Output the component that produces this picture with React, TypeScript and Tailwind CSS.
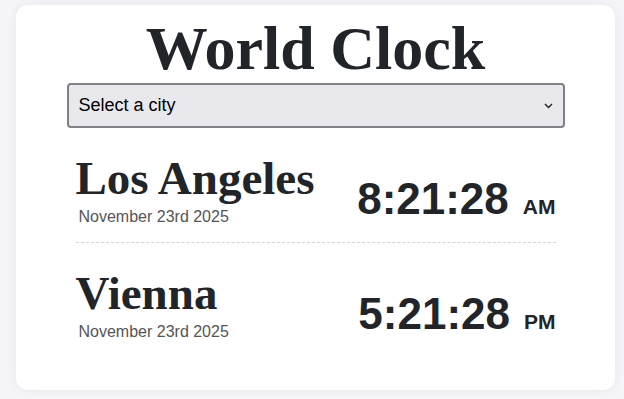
import { useState } from "react";

type City = {
	name: string;
	date: string;
	time: string;
	period: string;
};

const CITIES: City[] = [
	{ name: "Los Angeles", date: "November 23rd 2025", time: "8:21:28", period: "AM" },
	{ name: "Vienna", date: "November 23rd 2025", time: "5:21:28", period: "PM" },
];

function CityRow({ city, last }: { city: City; last: boolean }) {
	return (
		<div
			className={`flex items-start justify-between ${
				last ? "h-[114px]" : "h-[115px] border-b border-dashed border-[#d4d4d4]"
			}`}
		>
			<div className="flex flex-col pt-[24px]">
				<h2 className="font-['Liberation_Serif',serif] text-[47px] leading-[1.125] font-bold text-[#212529]">
					{city.name}
				</h2>
				<div className="mt-[2px] pl-[3px] font-['Liberation_Sans',Arial,sans-serif] text-[16px] leading-[1.2] text-[#555]">
					{city.date}
				</div>
			</div>
			<div className="flex items-baseline pt-[49px] font-['Liberation_Sans',Arial,sans-serif] font-bold text-[#212529]">
				<span className="text-[44px] leading-none">{city.time}</span>
				<span className="ml-[14px] text-[21px] leading-none">{city.period}</span>
			</div>
		</div>
	);
}

export default function App() {
	const [selected, setSelected] = useState("");

	return (
		<div className="min-h-[399px] w-full bg-[#f4f4f9] pt-[5px]">
			<div className="ml-4 w-[599px] rounded-xl bg-white pb-[33px] shadow-[0_0_12px_rgba(0,0,0,0.06)]">
				<h1 className="pt-[12px] text-center font-['Liberation_Serif',serif] text-[62px] leading-none font-bold text-[#212529]">
					World Clock
				</h1>
				<div className="mx-auto mt-[4px] w-[498px]">
					<div className="relative">
						<select
							value={selected}
							onChange={(e) => setSelected(e.target.value)}
							className="h-[45px] w-full appearance-none rounded-[4px] border-2 border-[#808086] bg-[#e9e9ed] pl-[10px] font-['Liberation_Sans',Arial,sans-serif] text-[18px] text-black"
						>
							<option value="">Select a city</option>
							<option value="tokyo">Tokyo</option>
							<option value="london">London</option>
						</select>
						<svg
							className="pointer-events-none absolute top-[20px] right-[12px]"
							width="9"
							height="6"
							viewBox="0 0 9 6"
							fill="none"
						>
							<path d="M1 1l3.5 3.5L8 1" stroke="#222" strokeWidth="1.4" />
						</svg>
					</div>
					<div className="flex flex-col px-[9px]">
						{CITIES.map((city, i) => (
							<CityRow key={city.name} city={city} last={i === CITIES.length - 1} />
						))}
					</div>
				</div>
			</div>
		</div>
	);
}
